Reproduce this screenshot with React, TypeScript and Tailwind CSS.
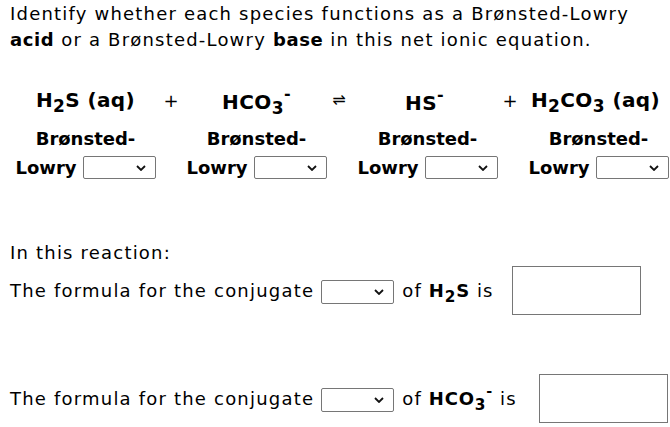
import React from "react";

const Select = ({ w = "w-[73px]", h = "h-[23px]" }: { w?: string; h?: string }) => (
  <span
    className={`inline-flex ${w} ${h} items-center justify-end pr-[9px] border border-[#767676] rounded-[2px] bg-white align-middle`}
  >
    <svg width="10" height="6" viewBox="0 0 10 6" fill="none">
      <path d="M1 1 L5 5 L9 1" stroke="#111" strokeWidth="1.8" />
    </svg>
  </span>
);

const Sub = ({ children }: { children: React.ReactNode }) => (
  <sub className="text-[0.85em] relative top-[0.3em]">{children}</sub>
);

const Minus = () => <sup className="text-[0.8em] relative -top-[0.6em]">-</sup>;

const Op = ({ children, cls = "" }: { children: React.ReactNode; cls?: string }) => (
  <div className={`w-0 shrink-0 flex justify-center font-normal tracking-normal ${cls}`}>
    <span className="whitespace-nowrap">{children}</span>
  </div>
);

const species = [
  <>
    H<Sub>2</Sub>S (aq)
  </>,
  <>
    HCO<Sub>3</Sub>
    <Minus />
  </>,
  <>
    HS<Minus />
  </>,
  <>
    H<Sub>2</Sub>CO<Sub>3</Sub> (aq)
  </>,
];

export default function App() {
  return (
    <div className="w-[670px] h-[427px] bg-white overflow-hidden text-black font-['DejaVu_Sans',Verdana,sans-serif] text-[18px]">
      {/* question */}
      <p className="pl-[10px] pt-[1px] leading-[26px] tracking-[1.2px]">
        Identify whether each species functions as a Brønsted-Lowry
        <br />
        <b className="tracking-[0.6px]">acid</b> or a Brønsted-Lowry <b className="tracking-[0.6px]">base</b> in this net ionic equation.
      </p>

      {/* equation */}
      <div className="mt-[34px] flex items-center h-[26px] font-bold text-[20px] tracking-[0.4px]">
        <div className="w-[171px] shrink-0 text-center">{species[0]}</div>
        <Op cls="text-[18px]">+</Op>
        <div className="w-[171px] shrink-0 text-center pt-[4px]">{species[1]}</div>
        <Op cls="text-[16px] -ml-[3px]">⇌</Op>
        <div className="w-[171px] shrink-0 text-center pt-[6px]">{species[2]}</div>
        <Op cls="text-[18px]">+</Op>
        <div className="w-[171px] shrink-0 text-center">{species[3]}</div>
      </div>

      <div className="mt-[11px] grid grid-cols-[171px_171px_171px_171px] font-bold leading-[29px]">
        {species.map((_, i) => (
          <div key={i} className="text-center whitespace-nowrap">
            <div>Brønsted-</div>
            <div className="flex items-center justify-center gap-[6px]">
              <span>Lowry</span>
              <Select />
            </div>
          </div>
        ))}
      </div>

      {/* conjugates */}
      <div className="pl-[10px] mt-[58px]">
        <p className="leading-[26px] tracking-[1.2px]">In this reaction:</p>
        <div className="flex items-center">
          <span className="tracking-[1.2px]">The formula for the conjugate</span>
          <span className="ml-[7px]">
            <Select h="h-[24px]" />
          </span>
          <span className="ml-[8px] tracking-[1.2px]">
            of{" "}
            <b className="tracking-[0.8px]">
              H<Sub>2</Sub>S
            </b>{" "}
            is
          </span>
          <div className="ml-[18px] w-[129px] h-[49px] border border-[#767676] bg-white" />
        </div>

        <div className="mt-[59px] flex items-center">
          <span className="tracking-[1.2px]">The formula for the conjugate</span>
          <span className="ml-[7px]">
            <Select h="h-[24px]" />
          </span>
          <span className="ml-[8px] tracking-[1.2px]">
            of{" "}
            <b className="tracking-[0.8px]">
              HCO<Sub>3</Sub>
              <Minus />
            </b>{" "}
            is
          </span>
          <div className="ml-[22px] w-[129px] h-[49px] border border-[#767676] bg-white" />
        </div>
      </div>
    </div>
  );
}
